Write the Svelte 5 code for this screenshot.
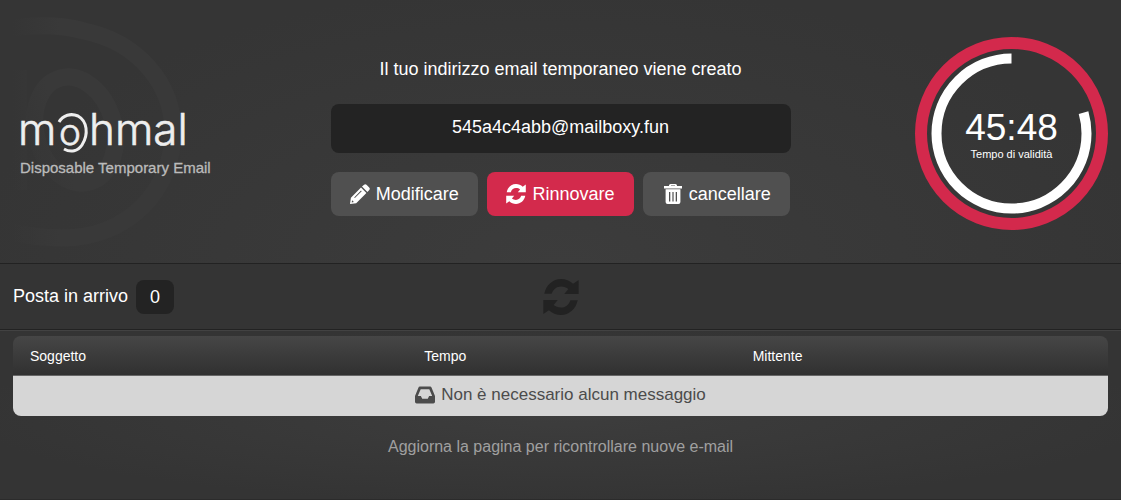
<script>
    let email = "545a4c4abb@mailboxy.fun";
    let timeLeft = "45:48";
    let remaining = 79.5; // percent of the white ring
    let messages = [];

    const icons = {
        pencil: "M12 2.6L14.1.7Q15.3-.3 16.5.8L19.2 3.5Q20.4 4.8 19.3 6L17.4 8zM11 3.6L16.4 9L6.2 19.2L0 20L.9 13.7zM11 6.6L4.2 13.4L4.9 14.1L11.7 7.3zM2.1 16.2L1.7 18.4L3.9 18z",
        sync: "M.7 8.2C1.7 3.4 5.4 0 10 0C12.6 0 14.9 1 16.7 2.7L19.8.6V8.3H11.8L14.1 5.5C13 4.6 11.7 4.1 10 4.1C7.6 4.1 5.7 5.6 4.8 8.2zM19.3 11.8C18.3 16.6 14.6 20 10 20C7.4 20 5.1 19 3.3 17.3L.2 19.4V11.7H8.2L5.9 14.5C7 15.4 8.3 15.9 10 15.9C12.4 15.9 14.3 14.4 15.2 11.8z",
        trash: "M6 2V1.6Q6 0 7.6 0H12.4Q14 0 14 1.6V2H19V4.6H1V2zM8 2H12V1.5H8zM2.6 5.2H17.4V18Q17.4 20 15.4 20H4.6Q2.6 20 2.6 18zM6 8V17.4H7.3V8zM9.4 8V17.4H10.6V8zM12.7 8V17.4H14V8z",
        inbox: "M3.4 2.8Q3.7 1.5 5 1.5H15Q16.3 1.5 16.6 2.8L20 11V16.8Q20 18.5 18.3 18.5H1.7Q0 18.5 0 16.8V11zM5.7 4.2L2.8 11H5.9L7.2 13.8H12.8L14.1 11H17.2L14.3 4.2z",
    };
</script>

<div class="page">
    <header>
        <!-- Faded @ behind the logo -->
        <svg class="watermark" viewBox="0 0 190 263" aria-hidden="true">
            <defs>
                <linearGradient id="fade" gradientUnits="userSpaceOnUse" x1="12" y1="0" x2="60" y2="0">
                    <stop offset="0" stop-color="#393939" stop-opacity="0" />
                    <stop offset="1" stop-color="#393939" />
                </linearGradient>
            </defs>
            <g fill="none" stroke="url(#fade)">
                <path stroke-width="17" d="M12 28C34 25 62 25 84 31C138 42 173 84 173 132C173 190 128 238 62 238C44 238 28 236 12 232" />
                <ellipse stroke-width="17" cx="75" cy="130" rx="39" ry="54" transform="rotate(-16 75 130)" />
                <path stroke-width="14" d="M20 70V190" />
            </g>
        </svg>

        <a href="/" class="brand" aria-label="mohmal">
            <svg class="logo" viewBox="0 0 200 42" aria-hidden="true">
                <text class="logo-name" y="33">
                    <tspan x="-2">m</tspan><tspan class="small-o" x="39">o</tspan><tspan x="69">hmal</tspan>
                </text>
                <path d="M39 10C43 3 51 1 58 4C67 9 69 22 62 33C58 39 51 41 44 37" />
            </svg>
            <span class="tagline">Disposable Temporary Email</span>
        </a>

        <div class="mailbox">
            <label for="email">Il tuo indirizzo email temporaneo viene creato</label>
            <input id="email" type="text" value={email} readonly />
            <div class="actions">
                <button type="button">
                    <svg class="icon" viewBox="0 0 20 20"><path d={icons.pencil} /></svg>
                    Modificare
                </button>
                <button type="button" class="primary">
                    <svg class="icon" viewBox="0 0 20 20"><path d={icons.sync} /></svg>
                    Rinnovare
                </button>
                <button type="button">
                    <svg class="icon" viewBox="0 0 20 20"><path d={icons.trash} /></svg>
                    cancellare
                </button>
            </div>
        </div>

        <div class="timer">
            <svg viewBox="0 0 193 193" aria-hidden="true">
                <circle class="ring" cx="96.5" cy="96.5" r="90.5" />
                <path
                    class="progress"
                    d="M96.5 21.5a75 75 0 0 0 0 150a75 75 0 0 0 0 -150"
                    pathLength="100"
                    stroke-dasharray="{remaining} 100"
                />
            </svg>
            <div class="timer-text">
                <span class="time">{timeLeft}</span>
                <span class="caption">Tempo di validità</span>
            </div>
        </div>
    </header>

    <section class="inbox-bar">
        <h2>Posta in arrivo <span class="count">{messages.length}</span></h2>
        <button type="button" class="refresh" aria-label="Aggiorna">
            <svg viewBox="0 0 20 20"><path d={icons.sync} /></svg>
        </button>
    </section>

    <main>
        <table>
            <thead>
                <tr>
                    <th class="subject">Soggetto</th>
                    <th class="when">Tempo</th>
                    <th>Mittente</th>
                </tr>
            </thead>
            <tbody>
                <tr>
                    <td colspan="3">
                        <div class="empty">
                            <svg class="icon" viewBox="0 0 20 20"><path d={icons.inbox} /></svg>
                            Non è necessario alcun messaggio
                        </div>
                    </td>
                </tr>
            </tbody>
        </table>
        <p>Aggiorna la pagina per ricontrollare nuove e-mail</p>
    </main>
</div>

<style>
    :global(body) {
        margin: 0;
        background: #333;
    }

    .page {
        min-height: 100vh;
        box-sizing: border-box;
        display: flex;
        flex-direction: column;
        font-family: "Liberation Sans", Arial, sans-serif;
        font-size: 18px;
        color: #fff;
        background: #343434;
    }

    header {
        position: relative;
        display: grid;
        grid-template-columns: 1fr 460px 1fr;
        align-items: center;
        padding: 37px 13px 33px;
        border-bottom: 1px solid #222;
        background: radial-gradient(ellipse at 50% 100%, #3c3c3c, #353535 75%);
    }

    /* Logo */
    .watermark {
        position: absolute;
        left: 0;
        top: 0;
        width: 190px;
        height: 263px;
    }

    .brand {
        position: relative;
        display: flex;
        flex-direction: column;
        align-items: flex-start;
        padding: 22px 7px 0;
        color: #bbb;
        text-decoration: none;
    }

    .logo {
        width: 200px;
        height: 42px;
        overflow: visible;
    }

    .logo-name {
        font-family: Inter, sans-serif;
        font-size: 44px;
        font-weight: 300;
        fill: #eee;
        stroke: #eee;
        stroke-width: 0.6px;
    }

    .small-o {
        font-size: 37px;
    }

    .logo path {
        fill: none;
        stroke: #eee;
        stroke-width: 3;
    }

    .tagline {
        margin-top: 4px;
        font-size: 15px;
        line-height: 20px;
        -webkit-text-stroke: 0.3px #bbb;
    }

    /* Address and buttons */
    .mailbox {
        display: flex;
        flex-direction: column;
        padding-top: 6px;
    }

    label {
        margin-bottom: 23px;
        line-height: 24px;
        text-align: center;
    }

    input {
        height: 49px;
        box-sizing: border-box;
        padding: 0 16px 3px;
        border: 0;
        border-radius: 8px;
        background: #232323;
        color: #fff;
        font: inherit;
        text-align: center;
        outline: none;
    }

    .actions {
        display: grid;
        grid-template-columns: repeat(3, 1fr);
        gap: 9px;
        margin-top: 19px;
    }

    button {
        display: flex;
        align-items: center;
        justify-content: center;
        gap: 6px;
        height: 44px;
        padding: 0;
        border: 0;
        border-radius: 8px;
        background: #505050;
        color: #fff;
        font: inherit;
        cursor: pointer;
    }

    .primary {
        background: #d32a4c;
    }

    .icon {
        width: 20px;
        height: 20px;
        fill: currentColor;
        fill-rule: evenodd;
    }

    /* Countdown */
    .timer {
        justify-self: end;
        display: grid;
        place-items: center;
        width: 193px;
        height: 193px;
    }

    .timer > * {
        grid-area: 1 / 1;
    }

    .timer svg {
        width: 193px;
        height: 193px;
        fill: none;
    }

    .ring {
        stroke: #d3294c;
        stroke-width: 12;
    }

    .progress {
        stroke: #fff;
        stroke-width: 10;
    }

    .timer-text {
        display: flex;
        flex-direction: column;
        align-items: center;
    }

    .time {
        font-size: 37px;
        line-height: 40px;
    }

    .caption {
        font-size: 11px;
        line-height: 12px;
    }

    /* Inbox bar */
    .inbox-bar {
        display: grid;
        grid-template-columns: 1fr auto 1fr;
        align-items: center;
        height: 65px;
        padding: 0 13px;
        border-bottom: 1px solid #222;
        background: #343434;
    }

    h2 {
        display: flex;
        align-items: center;
        gap: 8px;
        margin: 0;
        font-size: 18px;
        font-weight: 400;
    }

    .count {
        padding: 0 14px;
        border-radius: 8px;
        background: #232323;
        line-height: 34px;
    }

    .refresh {
        background: none;
        color: #222;
    }

    .refresh svg {
        width: 36px;
        height: 36px;
        fill: currentColor;
    }

    /* Messages */
    main {
        flex: 1;
        padding: 5px 13px 0;
        border-top: 1px solid #424242;
        border-bottom: 1px solid #2b2b2b;
        background: radial-gradient(ellipse at 50% 50%, #3d3d3d, #343434 75%);
    }

    table {
        width: 100%;
        table-layout: fixed;
        border-spacing: 0;
        border-radius: 8px;
        overflow: hidden;
    }

    thead {
        background: linear-gradient(#464646, #303030);
    }

    th {
        height: 39px;
        padding: 0 17px;
        border-bottom: 1px solid #666;
        font-size: 14px;
        font-weight: 400;
        text-align: left;
    }

    .subject {
        width: 36%;
        box-sizing: border-box;
    }

    .when {
        width: 30%;
        box-sizing: border-box;
    }

    td {
        height: 40px;
        padding: 0;
        background: #d6d6d6;
        color: #4c4c4c;
    }

    .empty {
        display: flex;
        align-items: center;
        justify-content: center;
        gap: 6px;
        padding-bottom: 2px;
        font-size: 17px;
    }

    p {
        margin: 21px 0 0;
        color: #a0a0a0;
        font-size: 16px;
        line-height: 20px;
        text-align: center;
    }
</style>
